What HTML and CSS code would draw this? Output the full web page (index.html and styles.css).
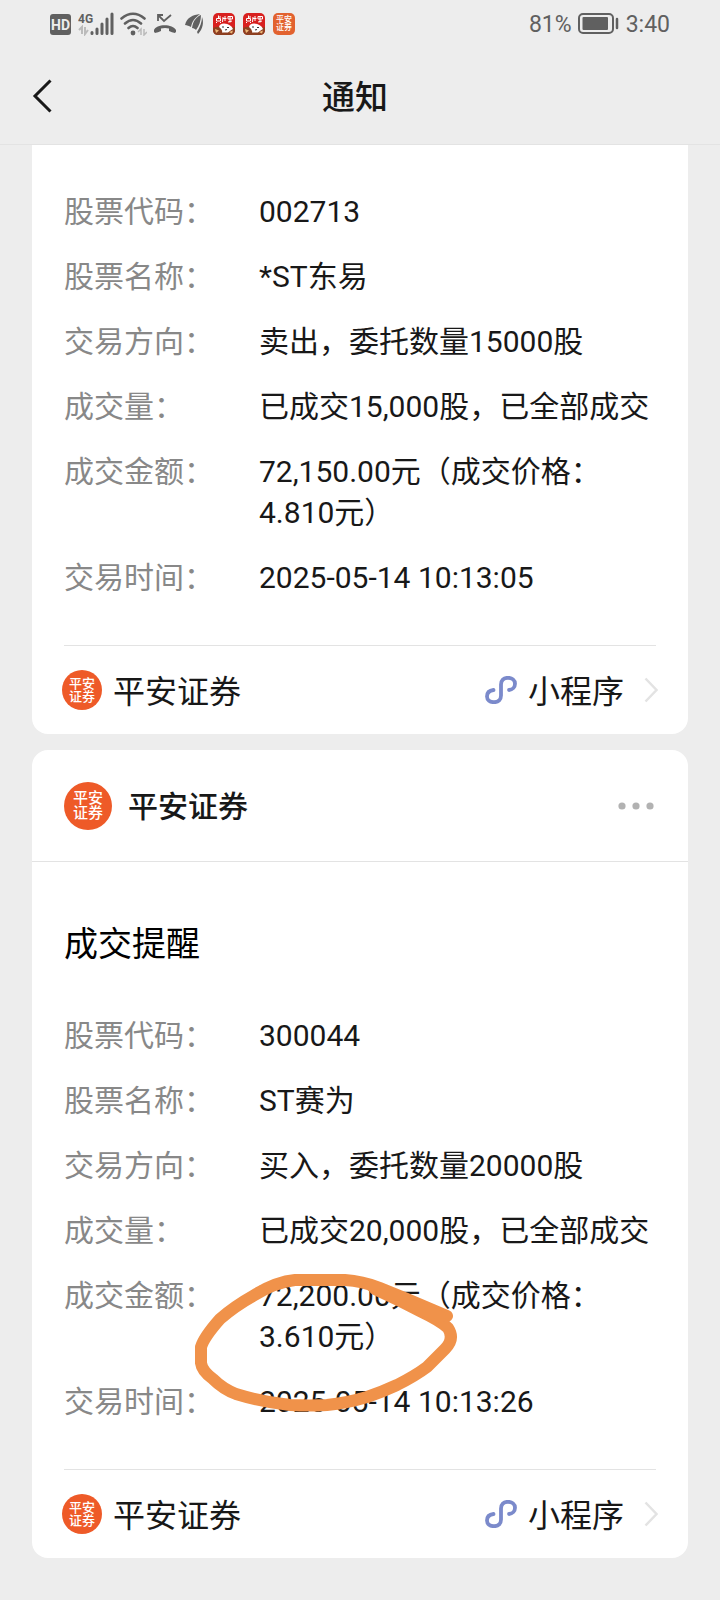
FILE: index.html
```html
<!DOCTYPE html>
<html lang="zh-CN">
<head>
<meta charset="utf-8">
<meta name="viewport" content="width=device-width, initial-scale=1">
<title>通知</title>
<link rel="stylesheet" href="styles.css">
</head>
<body>
<svg class="defs" aria-hidden="true">
  <symbol id="mini" viewBox="0 0 32 28">
    <path d="M8.500 14C4.500 14.500 2 17 2 20.500C2 24 5 26.200 9 26.200C13.500 26.200 16 23.500 16 19.500V8.500C16 4.500 18.500 1.800 23 1.800C27 1.800 30 4.200 30 7.700C30 11 27.500 13.800 24 14" fill="none" stroke="#7b8acb" stroke-width="3.800" stroke-linecap="round"/>
  </symbol>
  <symbol id="chevron" viewBox="0 0 14 26">
    <path d="M1.500 1.500L12.500 13L1.500 24.500" fill="none" stroke="#e3e3e3" stroke-width="2.500"/>
  </symbol>
  <symbol id="game" viewBox="0 0 22 22">
    <rect width="22" height="22" rx="5" fill="#d8201f"/>
    <path d="M0 15Q4 13 8 14Q12 12 17 14Q20 15 22 14V17Q22 22 17 22H5Q0 22 0 17Z" fill="#8d3f20"/>
    <path d="M3.500 5.500H7.500V8H3.500ZM5.500 2.500V5.500M5.500 4H8M3 10L4 9M7 9L8 10M10 4L9.500 9M12 3V8M10 5.500H13.500M15 3.500H19.500V6H15ZM17 3V9.500M15 9L19 8" stroke="#fff" stroke-width="1" fill="none"/>
    <path d="M6 14Q6.500 10.500 11 10.500Q18 11 20 16Q17 17.500 15 19.500H9Q10 17 6 14Z" fill="#fff"/>
    <path d="M9 14H11M14 14.500H16M12 17L14 16.500" stroke="#333" stroke-width="1.200"/>
    <path d="M2 16L6 17.500L3 20ZM16 19L20 17.500L19 20.500Z" fill="#efb878"/>
  </symbol>
</svg>

<header class="top">
  <div class="status">
    <div class="signals">
      <svg width="22" height="24" viewBox="0 0 22 24"><rect y="2" width="21" height="21" rx="3" fill="#606060"/><text x="10.500" y="18" class="t-hd">HD</text></svg>
      <svg width="36" height="24" viewBox="0 0 36 24"><text x="0" y="11" class="t-4g">4G</text><path d="M1 18L4 15V22M7 15V22L10 18" fill="none" stroke="#bbb" stroke-width="2"/><path d="M14 20.500V21.500M19 17V21.500M24 12V21.500M29 7V21.500M34 2V21.500" stroke="#606060" stroke-width="3" stroke-linecap="round"/></svg>
      <svg width="27" height="24" viewBox="0 0 27 24"><path d="M1.500 6.500Q13 -3 24.500 6.500M5 11.500Q13 4.500 21 11.500M8.500 16Q13 12 17.500 16" fill="none" stroke="#606060" stroke-width="2.600" stroke-linecap="round"/><circle cx="13" cy="21" r="2.400" fill="#606060"/><path d="M18 20L21 17V23M24 17V23L27 20" fill="none" stroke="#bbb" stroke-width="1.500"/></svg>
      <svg width="24" height="24" viewBox="0 0 24 24"><path d="M10 3H5V9M5 3L11 9L18 3" fill="none" stroke="#606060" stroke-width="1.800"/><path d="M1 18C3 11.500 20 11.500 23 18Q23.500 20 22 21Q19 20.500 16 19V16.500Q12 15.500 8 16.500V19Q5 20.500 2 21Q0.500 20 1 18Z" fill="#606060"/></svg>
      <svg width="24" height="24" viewBox="0 0 24 24"><g fill="#606060"><path d="M2 13C4 5 10 3 17 2C12 6 9 9 8 15C6 14 4 13 2 13Z"/><path d="M9 16C10 9 13 5 18 3C18 9 16 14 13 18C12 17 11 16 9 16Z"/><path d="M14 20C17 15 19 10 19 5C21 10 20 17 15 22Z"/></g></svg>
    </div>
    <div class="apps">
      <svg width="22" height="22"><use href="#game"/></svg>
      <svg width="22" height="22"><use href="#game"/></svg>
      <span class="logo logo-s"><span>平安<br>证券</span></span>
    </div>
    <div class="power">
      <span>81%</span>
      <svg width="42" height="22" viewBox="0 0 42 22"><rect x="1" y="1" width="34" height="19" rx="4" fill="none" stroke="#606060" stroke-width="2"/><rect x="4.500" y="4" width="25.500" height="13" rx="1" fill="#606060"/><path d="M39 6V15" stroke="#606060" stroke-width="2.500" stroke-linecap="round"/></svg>
      <time>3:40</time>
    </div>
  </div>
  <div class="nav">
    <button class="plain" type="button" aria-label="返回"><svg width="20" height="34" viewBox="0 0 20 34"><path d="M18.500 1.500L3 17L18.500 32.500" fill="none" stroke="#181818" stroke-width="3"/></svg></button>
    <h1>通知</h1>
  </div>
</header>

<main class="feed">
  <article class="card card-cut">
    <dl class="details">
      <dt>股票代码：</dt><dd>002713</dd>
      <dt>股票名称：</dt><dd>*ST东易</dd>
      <dt>交易方向：</dt><dd>卖出，委托数量15000股</dd>
      <dt>成交量：</dt><dd>已成交15,000股，已全部成交</dd>
      <dt>成交金额：</dt><dd>72,150.00元（成交价格：<br>4.810元）</dd>
      <dt>交易时间：</dt><dd>2025-05-14 10:13:05</dd>
    </dl>
    <a class="source" href="#">
      <span class="logo logo-m"><span>平安<br>证券</span></span>
      <span class="label name">平安证券</span>
      <svg width="32" height="28"><use href="#mini"/></svg>
      <span class="label">小程序</span>
      <svg class="go" width="14" height="26"><use href="#chevron"/></svg>
    </a>
  </article>

  <article class="card">
    <div class="sender">
      <span class="logo logo-l"><span>平安<br>证券</span></span>
      <h2>平安证券</h2>
      <button class="plain" type="button" aria-label="更多"><svg width="38" height="8" viewBox="0 0 38 8"><g fill="#b2b2b2"><circle cx="4" cy="4" r="3.600"/><circle cx="18" cy="4" r="3.600"/><circle cx="32" cy="4" r="3.600"/></g></svg></button>
    </div>
    <h3>成交提醒</h3>
    <dl class="details">
      <dt>股票代码：</dt><dd>300044</dd>
      <dt>股票名称：</dt><dd>ST赛为</dd>
      <dt>交易方向：</dt><dd>买入，委托数量20000股</dd>
      <dt>成交量：</dt><dd>已成交20,000股，已全部成交</dd>
      <dt>成交金额：</dt><dd class="marked">72,200.00元（成交价格：<br>3.610元）
        <svg class="circle" width="290" height="160" viewBox="184 1260 290 160" aria-hidden="true"><g fill="none" stroke="#f0924a" stroke-width="12" stroke-linecap="round" stroke-linejoin="round"><path d="M447 1316L407 1299L380 1288Q362 1281 345 1280H295Q275 1282 253 1296Q235 1306 220 1319Q204 1337 201 1347V1363Q202 1371 213 1379Q223 1389 236 1394Q262 1402 290 1405Q310 1406 327 1405Q347 1403 367 1397Q382 1392 397 1385Q415 1376 427 1367L445 1349Q455 1339 448 1328Q441 1321 420 1311L400 1301L375 1289"/><path d="M372 1286Q392 1294 410 1304L440 1317"/></g></svg></dd>
      <dt>交易时间：</dt><dd>2025-05-14 10:13:26</dd>
    </dl>
    <a class="source" href="#">
      <span class="logo logo-m"><span>平安<br>证券</span></span>
      <span class="label name">平安证券</span>
      <svg width="32" height="28"><use href="#mini"/></svg>
      <span class="label">小程序</span>
      <svg class="go" width="14" height="26"><use href="#chevron"/></svg>
    </a>
  </article>
</main>
</body>
</html>
```
FILE: styles.css
```css
* {
  box-sizing: border-box;
}

body {
  margin: 0;
  background: #ededed;
  color: #181818;
  font-family: Roboto, "Noto Sans CJK SC", sans-serif;
  font-size: 30px;
  line-height: 41px;
}

h1, h2, h3, dl, dd {
  margin: 0;
}

svg {
  display: block;
  flex: none;
}

.defs {
  position: absolute;
  width: 0;
  height: 0;
}

.plain {
  display: block;
  padding: 0;
  border: 0;
  background: none;
}

.top {
  border-bottom: 1px solid #e3e3e3;
}

.status {
  display: flex;
  align-items: center;
  height: 48px;
  padding: 0 50px;
  color: #606060;
  font-size: 23px;
}

.signals {
  display: flex;
  gap: 6px;
}

.apps {
  display: flex;
  gap: 8px;
  margin-left: 6px;
}

.power {
  display: flex;
  align-items: center;
  gap: 6px;
  margin-left: auto;
}

.t-hd {
  fill: #ededed;
  font: bold 14px Roboto, sans-serif;
  text-anchor: middle;
}

.t-4g {
  fill: #606060;
  font: bold 12px Roboto, sans-serif;
}

.nav {
  display: flex;
  align-items: center;
  height: 96px;
  padding: 0 42px 0 32px;
}

.nav h1 {
  flex: 1;
  padding: 3px 20px 0 0;
  font-size: 33px;
  font-weight: 500;
  text-align: center;
}

.feed {
  display: flex;
  flex-direction: column;
  gap: 16px;
  padding: 0 32px 42px;
}

.card {
  background: #fff;
  border-radius: 16px;
}

.card-cut {
  padding-top: 46px;
  border-radius: 0 0 16px 16px;
}

.sender {
  display: flex;
  align-items: center;
  gap: 16px;
  height: 112px;
  padding: 0 32px;
  border-bottom: 1px solid #e3e3e3;
}

.sender h2 {
  flex: 1;
  padding-top: 2px;
  font-size: 30px;
  font-weight: 500;
}

.card h3 {
  padding: 58px 32px 47px;
  color: #000;
  font-size: 34px;
  font-weight: 400;
  line-height: 48px;
}

.details {
  display: grid;
  grid-template-columns: 171px 1fr;
  gap: 24px;
  margin: 0 32px;
  padding-bottom: 47px;
  border-bottom: 1px solid #e3e3e3;
}

.details dt {
  color: #888;
}

.marked {
  position: relative;
}

.circle {
  position: absolute;
  left: -75px;
  top: -15px;
}

.source {
  display: flex;
  align-items: center;
  gap: 11px;
  height: 88px;
  padding: 0 30px;
  color: inherit;
  font-size: 32px;
  text-decoration: none;
}

.label {
  padding-top: 4px;
}

.name {
  flex: 1;
}

.go {
  margin-left: 9px;
}

.logo {
  display: grid;
  flex: none;
  place-items: center;
  border-radius: 50%;
  background: #ee5a28;
  color: #fff;
  font-weight: 500;
}

.logo-s {
  width: 22px;
  height: 22px;
  border-radius: 5px;
  background: #e2622f;
  font-size: 8px;
  line-height: 8px;
}

.logo-m {
  width: 40px;
  height: 40px;
  font-size: 13px;
  line-height: 13px;
}

.logo-l {
  width: 48px;
  height: 48px;
  font-size: 15px;
  line-height: 15px;
}
```
